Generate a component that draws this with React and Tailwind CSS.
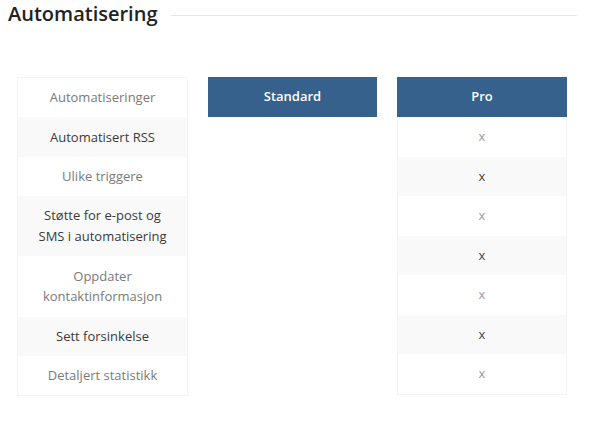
import React from "react";

const features = [
  { label: ["Automatiseringer"], gray: false },
  { label: ["Automatisert RSS"], gray: true },
  { label: ["Ulike triggere"], gray: false },
  { label: ["Støtte for e-post og", "SMS i automatisering"], gray: true },
  { label: ["Oppdater", "kontaktinformasjon"], gray: false },
  { label: ["Sett forsinkelse"], gray: true },
  { label: ["Detaljert statistikk"], gray: false },
];

export default function App() {
  return (
    <div
      className="w-[595px] h-[436px] bg-white overflow-hidden"
      style={{ fontFamily: '"Open Sans", sans-serif' }}
    >
      <div className="flex items-center h-[28px]">
        <h2 className="pl-2 text-[20px] leading-[28px] font-semibold text-[#222]">
          Automatisering
        </h2>
        <div className="flex-1 ml-[14px] mr-[18px] mt-[2px] h-px bg-[#e6e6e6]" />
      </div>

      <div className="flex gap-5 pl-[17px] mt-[49px]">
        <div className="w-[171px] flex flex-col border border-[#f4f4f4]">
          {features.map((f, i) => (
            <div
              key={i}
              className={`flex flex-col items-center justify-center text-center text-[13px] leading-[20.8px] py-[9.3px] ${
                f.gray ? "bg-[#f9f9f9] text-[#3a3a3a]" : "bg-white text-[#7a7a7a]"
              }`}
            >
              {f.label.map((l, j) => (
                <span key={j}>{l}</span>
              ))}
            </div>
          ))}
        </div>

        <div className="w-[169px]">
          <div className="h-10 bg-[#35618c] text-white text-[13px] font-semibold flex items-center justify-center">
            Standard
          </div>
        </div>

        <div className="w-[170px] flex flex-col">
          <div className="h-10 bg-[#35618c] text-white text-[13px] font-semibold flex items-center justify-center">
            Pro
          </div>
          <div className="flex flex-col border-x border-b border-[#f4f4f4]">
            {[0, 1, 2, 3, 4, 5, 6].map((i) => (
              <div
                key={i}
                className={`h-[39.5px] flex items-center justify-center text-[13px] ${
                  i % 2 === 1 ? "bg-[#f9f9f9] text-[#444]" : "bg-white text-[#999]"
                }`}
              >
                x
              </div>
            ))}
          </div>
        </div>
      </div>
    </div>
  );
}
